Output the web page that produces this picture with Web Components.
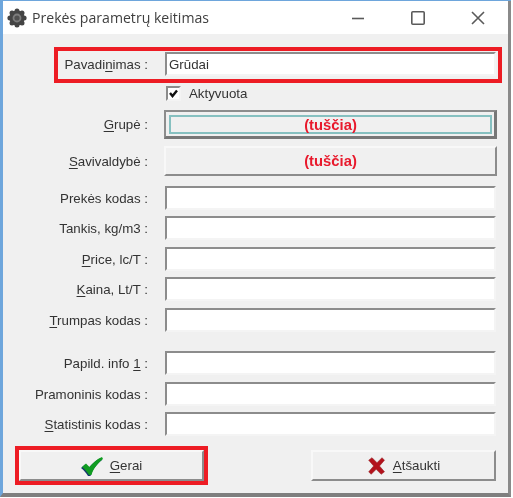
<!DOCTYPE html>
<html lang="lt">
<head>
<meta charset="utf-8">
<title>Prekės parametrų keitimas</title>
<style>
    html, body { margin: 0; background: #fff; }
</style>
</head>
<body>
<goods-dialog></goods-dialog>
<script>
// --- Title bar ---
class TitleBar extends HTMLElement {
    connectedCallback() {
        this.attachShadow({ mode: 'open' });
        this.shadowRoot.innerHTML = `
            <style>
                :host { display: flex; align-items: center; height: 33px; background: #fff; font: 14.1px "Open Sans", sans-serif; color: #3f3f3f; }
                .gear { margin: 0 5px 0 4px; width: 20px; height: 20px; }
                .title { flex: 1; }
                .ctl { width: 60px; height: 33px; display: flex; align-items: center; justify-content: center; }
                .ctl svg { width: 16px; height: 16px; fill: none; stroke: #5a5a5a; stroke-width: 1.6; }
            </style>
            <svg class="gear" viewBox="0 0 20 20">
                <circle cx="10" cy="10" r="7.6" fill="#474747"/>
                <g fill="#444">
                    <circle cx="10" cy="2.9" r="2.5"/><circle cx="10" cy="17.1" r="2.5"/>
                    <circle cx="2.9" cy="10" r="2.5"/><circle cx="17.1" cy="10" r="2.5"/>
                    <circle cx="5" cy="5" r="2.5"/><circle cx="15" cy="5" r="2.5"/>
                    <circle cx="5" cy="15" r="2.5"/><circle cx="15" cy="15" r="2.5"/>
                </g>
                <circle cx="10" cy="10" r="4.4" fill="#7d7d7d"/>
                <circle cx="10" cy="10" r="2.6" fill="#505050"/>
            </svg>
            <span class="title"><slot></slot></span>
            <span class="ctl"><svg viewBox="0 0 16 16"><path d="M2 8.5h12"/></svg></span>
            <span class="ctl"><svg viewBox="0 0 16 16"><rect x="1.8" y="1.8" width="12.4" height="12.4" rx="1"/></svg></span>
            <span class="ctl"><svg viewBox="0 0 16 16"><path d="M2 2l12 12M14 2L2 14"/></svg></span>
        `;
    }
}

// --- Label + field row ---
class FormRow extends HTMLElement {
    connectedCallback() {
        this.attachShadow({ mode: 'open' });
        this.shadowRoot.innerHTML = `
            <style>
                :host { display: grid; grid-template-columns: 145px 1fr; column-gap: 17px; align-items: center; position: relative; }
                .label { text-align: right; white-space: nowrap; }
                :host([marked])::before { content: ""; position: absolute; left: 51px; right: -6px; top: -5px; bottom: -7px; border: 4px solid #ed1c24; pointer-events: none; z-index: 1; }
            </style>
            <span class="label"><slot name="label"></slot></span>
            <slot></slot>
        `;
    }
}

// --- Sunken text box ---
class TextField extends HTMLElement {
    connectedCallback() {
        this.attachShadow({ mode: 'open' });
        this.shadowRoot.innerHTML = `
            <style>
                :host { display: flex; align-items: center; box-sizing: border-box; height: 24px; padding: 0 0 0 2px; background: #fff; border: 2px solid #f4f4f4; border-top-color: #8c8c8c; border-left-color: #8c8c8c; }
            </style>
            <slot></slot>
        `;
    }
}

// --- Flat raised button used for the pick fields and dialog buttons ---
class RaisedButton extends HTMLElement {
    connectedCallback() {
        this.attachShadow({ mode: 'open' });
        this.shadowRoot.innerHTML = `
            <style>
                :host { display: block; box-sizing: border-box; border: 2px solid #f8f8f8; border-right-color: #8c8c8c; border-bottom-color: #8c8c8c; background: #f0f0f0; }
                :host([focused]) { border-top-color: #8c8c8c; border-left-color: #8c8c8c; border-right: 3px solid #777; border-bottom: 3px solid #777; padding: 3px 2px 2px 3px; }
                .in { display: flex; height: 100%; box-sizing: border-box; align-items: center; justify-content: center; gap: 6px; }
                :host([focused]) .in { border: 2px solid #86c0c0; padding-top: 1px; }
            </style>
            <div class="in"><slot></slot></div>
        `;
    }
}

// --- Checkbox with caption ---
class CheckField extends HTMLElement {
    connectedCallback() {
        this.attachShadow({ mode: 'open' });
        this.shadowRoot.innerHTML = `
            <style>
                :host { display: flex; align-items: center; gap: 8px; height: 15px; }
                .box { width: 15px; height: 15px; box-sizing: border-box; background: #fff; border: 2px solid #f4f4f4; border-top-color: #8c8c8c; border-left-color: #8c8c8c; }
                svg { display: block; width: 11px; height: 11px; fill: none; stroke: #111; stroke-width: 2.4; }
            </style>
            <span class="box"><svg viewBox="0 0 11 11"><path d="M2 5l2.5 3L9 2.5"/></svg></span>
            <slot></slot>
        `;
    }
}

// --- The whole dialog ---
class GoodsDialog extends HTMLElement {
    connectedCallback() {
        this.attachShadow({ mode: 'open' });
        this.shadowRoot.innerHTML = `
            <style>
                :host { display: block; width: 511px; height: 497px; box-sizing: border-box; filter: blur(.55px); border-top: 1px solid #6ea6dc; font: 13.3px "Liberation Sans", sans-serif; color: #333; }
                .frame { border-left: 3px solid #6ea6dc; border-right: 3px solid #8a8a8a; border-bottom: 4px solid #7f7f7f; height: 100%; box-sizing: border-box; background: #f0f0f0; display: flex; flex-direction: column; }
                .form { flex: 1; display: flex; flex-direction: column; padding: 18px 12px 0 0; }
                text-field { width: 331px; }
                u { text-underline-offset: 2px; }
                .red { color: #e8192c; font-weight: bold; font-size: 14.8px; }
                check-field { margin: 10px 0 0 163px; }
                .pick { height: 30px; width: 333px; margin-left: -1px; }
                .gap7 { margin-top: 7px; }
                .gap6 { margin-top: 6px; }
                .gap10 { margin-top: 10px; }
                .gap19 { margin-top: 19px; }
                .buttons { display: flex; gap: 107px; margin: 14px 0 0 16px; }
                .buttons raised-button { width: 185px; height: 31px; }
                .buttons svg { width: 23px; height: 20px; }
                .btn-mark { position: relative; }
                .btn-mark::before { content: ""; position: absolute; left: -6px; right: -6px; top: -6px; bottom: -6px; border: 4px solid #ed1c24; }
            </style>
            <div class="frame">
                <title-bar>Prekės parametrų keitimas</title-bar>
                <div class="form">
                    <form-row marked><span slot="label">Pavadi<u>n</u>imas :</span><text-field>Grūdai</text-field></form-row>
                    <check-field>Aktyvuota</check-field>
                    <form-row style="margin-top:9px"><span slot="label"><u>G</u>rupė :</span><raised-button class="pick" focused style="height:29px"><span class="red">(tuščia)</span></raised-button></form-row>
                    <form-row class="gap7"><span slot="label"><u>S</u>avivaldybė :</span><raised-button class="pick"><span class="red">(tuščia)</span></raised-button></form-row>
                    <form-row class="gap10"><span slot="label">Prekės kodas :</span><text-field></text-field></form-row>
                    <form-row class="gap6"><span slot="label">Tankis, kg/m3 :</span><text-field></text-field></form-row>
                    <form-row class="gap7"><span slot="label"><u>P</u>rice, lc/T :</span><text-field></text-field></form-row>
                    <form-row class="gap6"><span slot="label"><u>K</u>aina, Lt/T :</span><text-field></text-field></form-row>
                    <form-row class="gap7"><span slot="label"><u>T</u>rumpas kodas :</span><text-field></text-field></form-row>
                    <form-row class="gap19"><span slot="label">Papild. info <u>1</u> :</span><text-field></text-field></form-row>
                    <form-row class="gap7"><span slot="label">Pramoninis kodas :</span><text-field></text-field></form-row>
                    <form-row class="gap6"><span slot="label"><u>S</u>tatistinis kodas :</span><text-field></text-field></form-row>
                    <div class="buttons">
                        <raised-button class="btn-mark">
                            <svg viewBox="0 0 23 20">
                                <path d="M0 12L4 8.500 7.500 12C11 8 15 4 20 2L21 4C16 8 11 14 9.500 20H7C5 17 3 14 0 12z" fill="#16386e"/>
                                <path d="M1 11L5 7.500 8.500 11C12 7 16 3 21 1L22 3C17 7 12 13 10.500 19H8C6 16 4 13 1 11z" fill="#109c22"/>
                            </svg>
                            <span><u>G</u>erai</span>
                        </raised-button>
                        <raised-button>
                            <svg viewBox="0 0 24 22" style="width:20px"><path d="M2 4l4-3 6 6 6-6 3 3-6 7 6 7-4 3-6-6-6 6-3-3 6-7z" fill="#b3121c" stroke="#8e1a1f" stroke-width=".6"/></svg>
                            <span><u>A</u>tšaukti</span>
                        </raised-button>
                    </div>
                </div>
            </div>
        `;
    }
}

customElements.define('title-bar', TitleBar);
customElements.define('form-row', FormRow);
customElements.define('text-field', TextField);
customElements.define('raised-button', RaisedButton);
customElements.define('check-field', CheckField);
customElements.define('goods-dialog', GoodsDialog);
</script>
</body>
</html>
